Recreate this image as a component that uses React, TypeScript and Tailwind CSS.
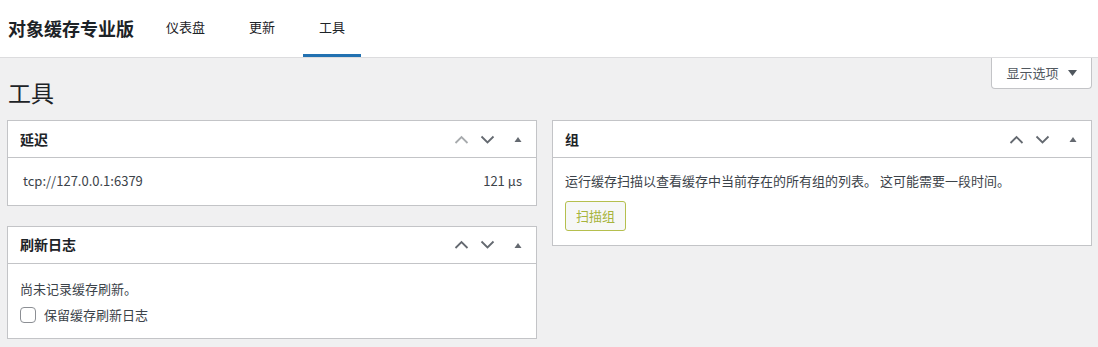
import React from 'react';

const font = { fontFamily: '"Noto Sans CJK SC", "Noto Sans", sans-serif' };

function Chevron({ dir, muted }: { dir: 'up' | 'down'; muted?: boolean }) {
  return (
    <svg width="15" height="9" viewBox="0 0 15 9" className={muted ? 'text-[#a7aaad]' : 'text-[#646970]'}>
      <path
        d={dir === 'up' ? 'M1.5 8 L7.5 2 L13.5 8' : 'M1.5 1.5 L7.5 7.5 L13.5 1.5'}
        fill="none"
        stroke="currentColor"
        strokeWidth="1.8"
      />
    </svg>
  );
}

function BoxControls({ upMuted }: { upMuted?: boolean }) {
  return (
    <div className="flex items-center">
      <span className="w-[26px] flex justify-center"><Chevron dir="up" muted={upMuted} /></span>
      <span className="w-[26px] flex justify-center"><Chevron dir="down" /></span>
      <span className="w-[36px] flex justify-center">
        <svg width="10" height="8" viewBox="0 0 10 8" className="text-[#646970]">
          <path d="M1.5 7 L5 2 L8.5 7 Z" fill="currentColor" />
        </svg>
      </span>
    </div>
  );
}

function Postbox({ title, upMuted, children }: { title: string; upMuted?: boolean; children: React.ReactNode }) {
  return (
    <div className="bg-white border border-[#c3c4c7]">
      <div className="h-[37px] flex items-center justify-between pl-[12px] border-b border-[#c3c4c7]">
        <h2 className="text-[14px] font-semibold text-[#1d2327]">{title}</h2>
        <BoxControls upMuted={upMuted} />
      </div>
      <div className="px-[12px] pt-[12px] pb-[12px] text-[13px] text-[#3c434a]">{children}</div>
    </div>
  );
}

export default function App() {
  return (
    <div className="min-h-[347px] bg-[#f0f0f1]" style={font}>
      <div className="h-[58px] bg-white border-b border-[#dcdcde] flex items-stretch pl-[8px]">
        <div className="flex items-center text-[18px] font-bold text-[#1d2327] pr-[16px]">对象缓存专业版</div>
        <nav className="flex items-stretch gap-3 text-[13px] text-[#1d2327]">
          <a className="px-4 flex items-center border-b-[3px] border-transparent">仪表盘</a>
          <a className="px-4 flex items-center border-b-[3px] border-transparent">更新</a>
          <a className="px-4 flex items-center border-b-[3px] border-[#2271b1]">工具</a>
        </nav>
      </div>
      <div className="flex justify-end pr-[6px]">
        <button className="h-[31px] w-[101px] bg-white border border-t-0 border-[#c3c4c7] rounded-b-[4px] text-[13px] text-[#50575e] flex items-center justify-center gap-[9px]">
          显示选项
          <svg width="9" height="6" viewBox="0 0 9 6"><path d="M0 0 L9 0 L4.5 6 Z" fill="#50575e" /></svg>
        </button>
      </div>
      <h1 className="pl-[8px] -mt-[13px] text-[23px] leading-[32px] text-[#1d2327]">工具</h1>
      <div className="flex gap-[15px] pl-[7px] pt-[12px] pb-[8px]">
        <div className="w-[530px] flex flex-col gap-[20px]">
          <Postbox title="延迟" upMuted>
            <div className="flex justify-between pl-[3px] pr-[2px] pt-[1px] pb-[2px]">
              <span>tcp://127.0.0.1:6379</span>
              <span>121 µs</span>
            </div>
          </Postbox>
          <Postbox title="刷新日志">
            <p className="pt-[3px]">尚未记录缓存刷新。</p>
            <label className="flex items-center gap-[8px] mt-[7px] pb-[1px]">
              <span className="w-[16px] h-[16px] border border-[#8c8f94] rounded-[4px] bg-white" />
              <span>保留缓存刷新日志</span>
            </label>
          </Postbox>
        </div>
        <div className="w-[540px] self-start">
          <Postbox title="组">
            <p className="pt-[1px]">运行缓存扫描以查看缓存中当前存在的所有组的列表。 这可能需要一段时间。</p>
            <button className="mt-[10px] mb-[2px] h-[30px] px-[10px] border border-[#b5bf4e] rounded-[3px] bg-[#f6f7f7] text-[13px] text-[#a7b43c]">
              扫描组
            </button>
          </Postbox>
        </div>
      </div>
    </div>
  );
}
